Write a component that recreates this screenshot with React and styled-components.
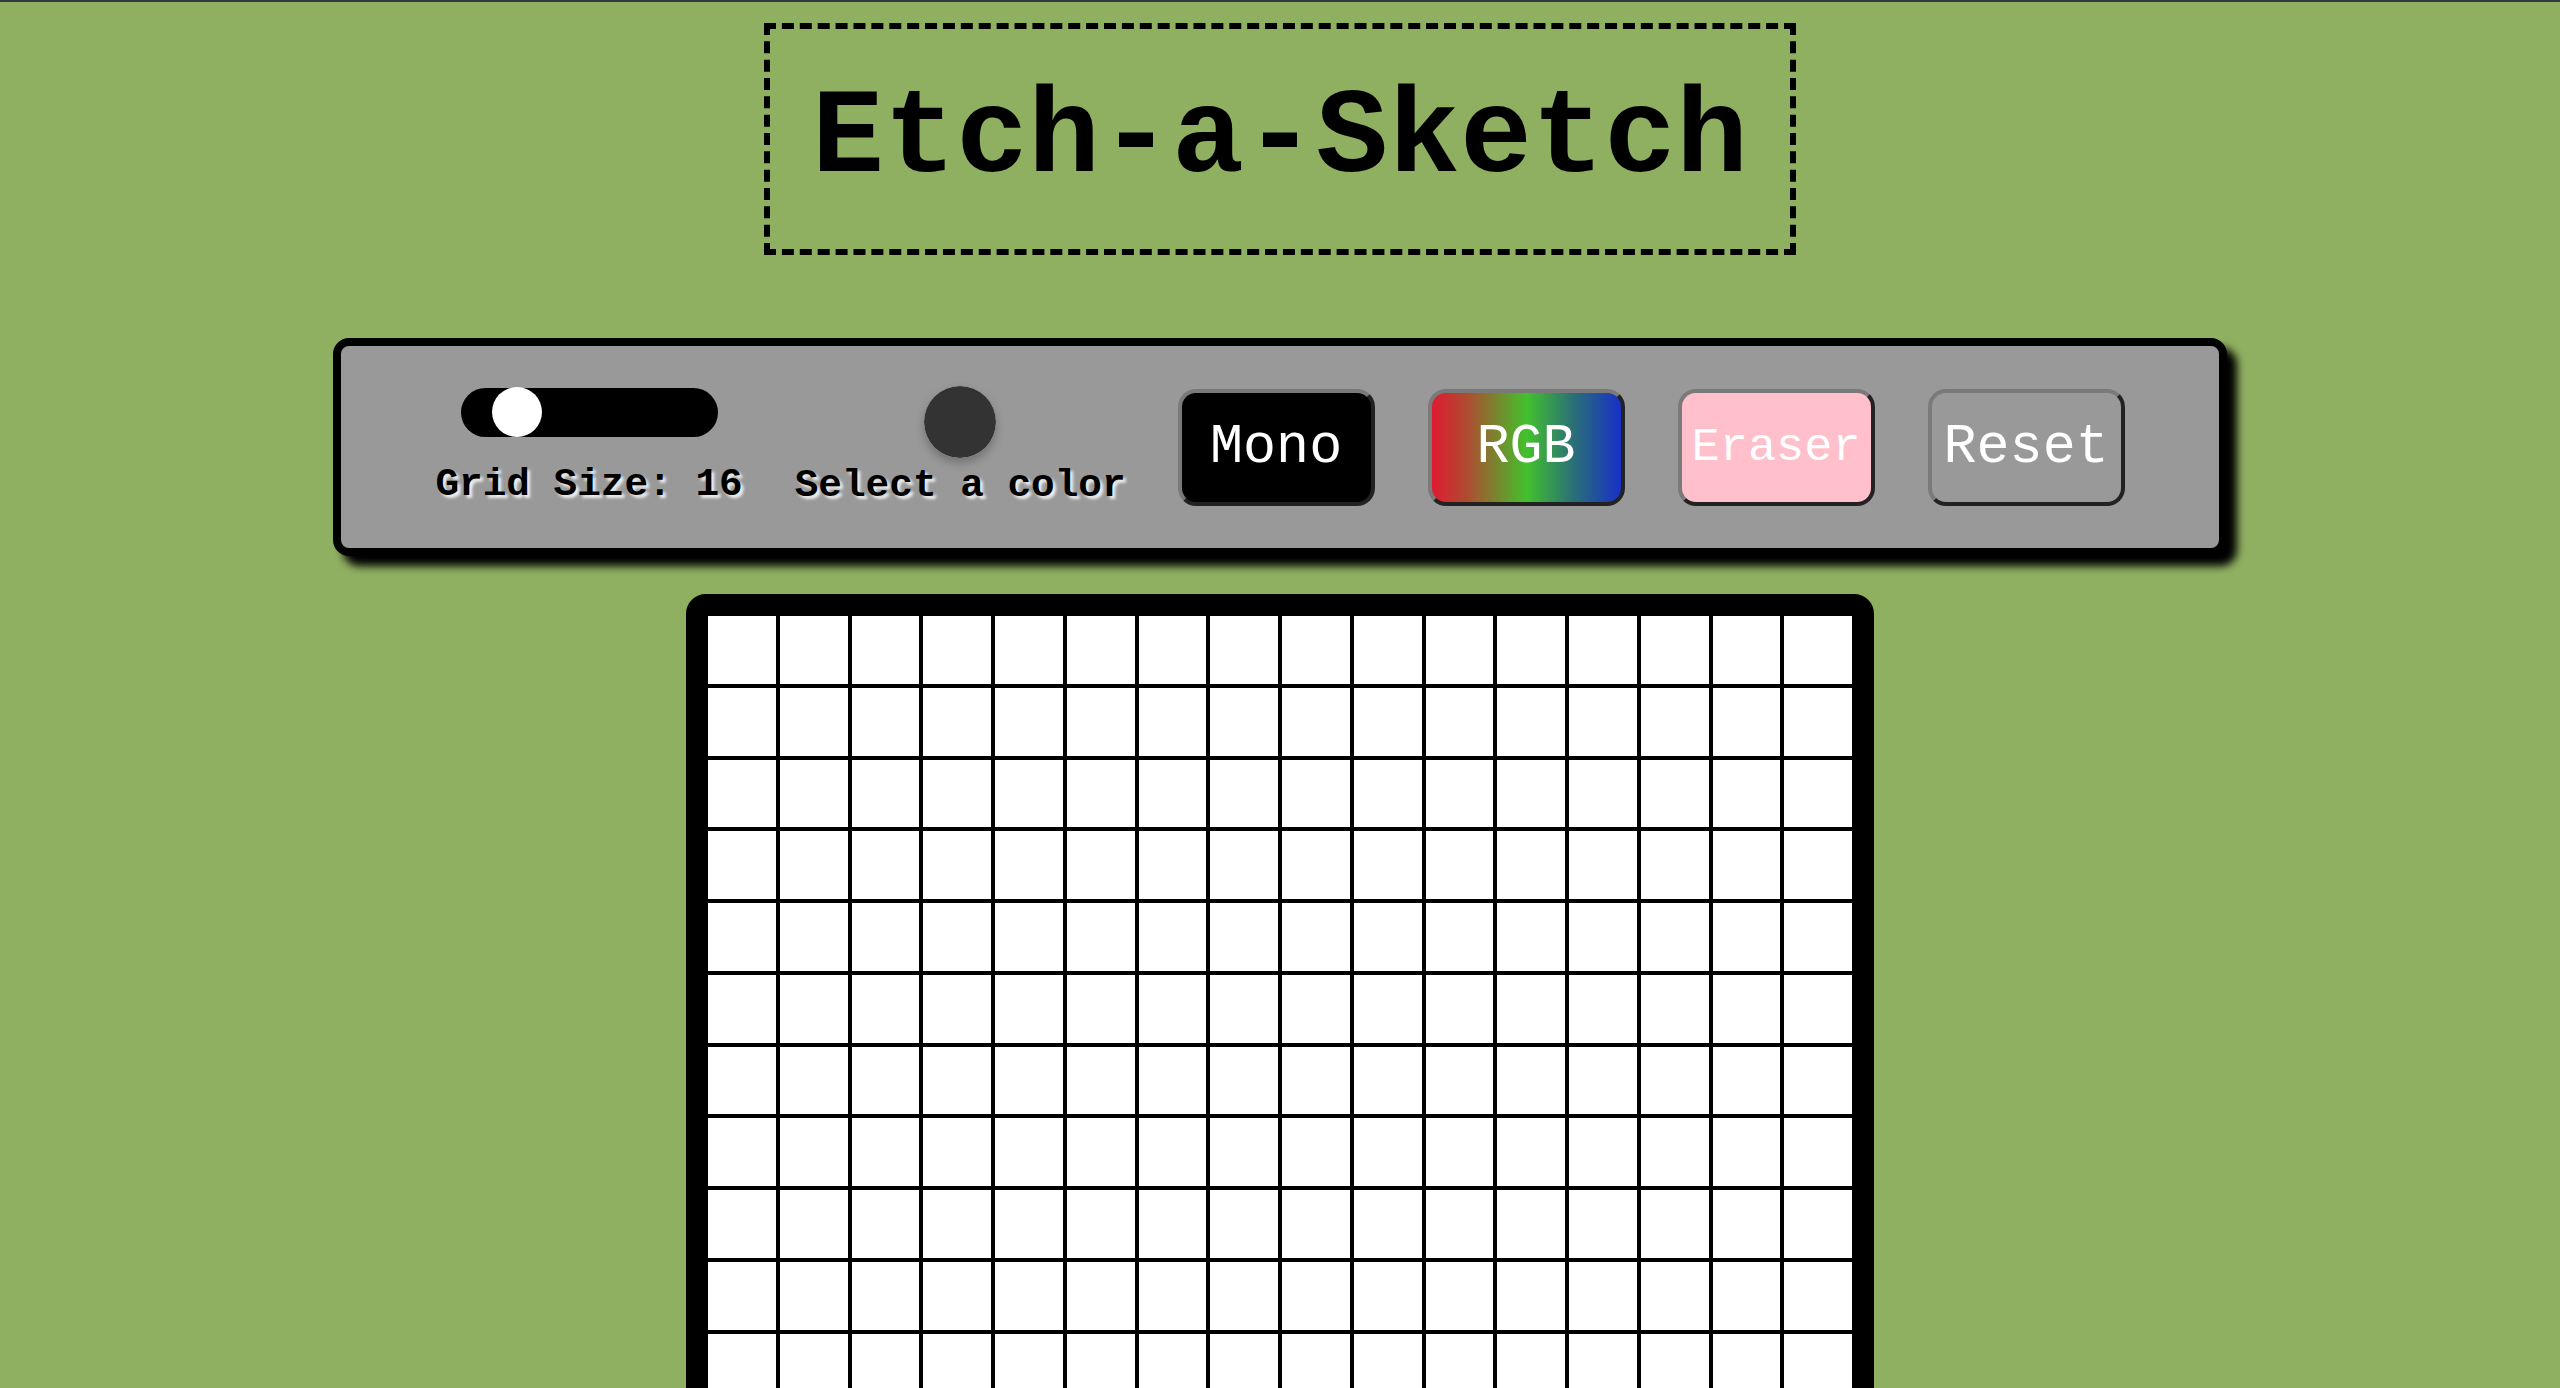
import React, { useState } from "react";
import styled, { createGlobalStyle } from "styled-components";

const GlobalStyle = createGlobalStyle`
  html, body {
    margin: 0;
    padding: 0;
    background-color: #90b061;
    font-family: "Liberation Mono", "Courier New", monospace;
  }
`;

const Page = styled.div`
  min-height: 100vh;
  border-top: 2px solid #363944;
  display: flex;
  flex-direction: column;
  align-items: center;
  overflow: hidden;
`;

const Title = styled.h1`
  margin: 21px 0 0;
  padding: 42px;
  border: 6px dashed #000;
  font-size: 120px;
  font-weight: bold;
  line-height: normal;
  color: #000;
`;

const Controls = styled.div`
  margin-top: 83px;
  width: 1878px;
  padding: 40px 0;
  box-sizing: content-box;
  display: flex;
  justify-content: center;
  align-items: center;
  gap: 52px;
  background-color: #999;
  border: 8px solid #000;
  border-radius: 16px;
  box-shadow: 10px 10px 8px #000;
`;

const Group = styled.div`
  display: flex;
  flex-direction: column;
  align-items: center;
  gap: ${(p) => p.$gap}px;
`;

const Buttons = styled.div`
  display: flex;
  align-items: center;
  gap: 53px;
`;

const Label = styled.label`
  font-size: 39.4px;
  font-weight: bold;
  color: #000;
  white-space: pre;
  text-shadow: 3px 3px 3px rgba(255, 255, 255, 0.85);
`;

const Slider = styled.input`
  -webkit-appearance: none;
  appearance: none;
  margin: 0;
  width: 257px;
  height: 49px;
  background: #000;
  border-radius: 25px;
  outline: none;
  cursor: pointer;

  &::-webkit-slider-thumb {
    -webkit-appearance: none;
    appearance: none;
    width: 50px;
    height: 50px;
    border-radius: 50%;
    background: #fff;
  }
`;

const ColorPicker = styled.input`
  -webkit-appearance: none;
  appearance: none;
  margin: 0;
  padding: 0;
  width: 72px;
  height: 72px;
  border: none;
  border-radius: 50%;
  background: none;
  box-shadow: 0 5px 10px rgba(0, 0, 0, 0.25);
  cursor: pointer;

  &::-webkit-color-swatch-wrapper {
    padding: 0;
  }
  &::-webkit-color-swatch {
    border: none;
    border-radius: 50%;
  }
`;

const Button = styled.button`
  width: 197px;
  height: 117px;
  padding: 0;
  font-family: "Liberation Mono", "Courier New", monospace;
  font-size: ${(p) => p.$size || 55}px;
  color: #fff;
  background: ${(p) => p.$bg};
  border: 4px solid;
  border-color: #7a7a7a #222 #222 #7a7a7a;
  border-radius: 18px;
  cursor: pointer;
  white-space: nowrap;
  overflow: hidden;
`;

const Board = styled.div`
  margin-top: 38px;
  width: 1148px;
  height: 1148px;
  flex-shrink: 0;
  display: grid;
  grid-template-columns: repeat(${(p) => p.$size}, 1fr);
  grid-template-rows: repeat(${(p) => p.$size}, 1fr);
  border: 20px solid #000;
  border-radius: 20px;
  background: #fff;
`;

const Cell = styled.div`
  box-sizing: border-box;
  border: 2px solid #000;
  background: ${(p) => p.$color || "#fff"};
`;

const App = () => {
  const [size, setSize] = useState(16);
  const [color, setColor] = useState("#333333");
  const [mode, setMode] = useState("mono");
  const [cells, setCells] = useState({});

  const paint = (i) => {
    let c = color;
    if (mode === "rgb") {
      c = `rgb(${Math.floor(Math.random() * 256)}, ${Math.floor(
        Math.random() * 256
      )}, ${Math.floor(Math.random() * 256)})`;
    } else if (mode === "eraser") {
      c = "#fff";
    }
    setCells((prev) => ({ ...prev, [i]: c }));
  };

  return (
    <>
      <GlobalStyle />
      <Page>
        <Title>Etch-a-Sketch</Title>
        <Controls>
          <Group $gap={25}>
            <Slider
              type="range"
              min="1"
              max="100"
              value={size}
              onChange={(e) => {
                setSize(Number(e.target.value));
                setCells({});
              }}
            />
            <Label>Grid Size: {size}</Label>
          </Group>
          <Group $gap={5}>
            <ColorPicker
              type="color"
              value={color}
              onChange={(e) => setColor(e.target.value)}
            />
            <Label>Select a color</Label>
          </Group>
          <Buttons>
            <Button $bg="#000" onClick={() => setMode("mono")}>
              Mono
            </Button>
            <Button
              $bg="linear-gradient(to right, #e01a33 0%, #b04a30 18%, #43c02d 50%, #2a6f78 75%, #1830c6 100%)"
              onClick={() => setMode("rgb")}
            >
              RGB
            </Button>
            <Button $bg="#ffc0cb" $size={47} onClick={() => setMode("eraser")}>
              Eraser
            </Button>
            <Button $bg="transparent" onClick={() => setCells({})}>
              Reset
            </Button>
          </Buttons>
        </Controls>
        <Board $size={size}>
          {Array.from({ length: size * size }, (_, i) => (
            <Cell key={i} $color={cells[i]} onMouseOver={() => paint(i)} />
          ))}
        </Board>
      </Page>
    </>
  );
};

export default App;
